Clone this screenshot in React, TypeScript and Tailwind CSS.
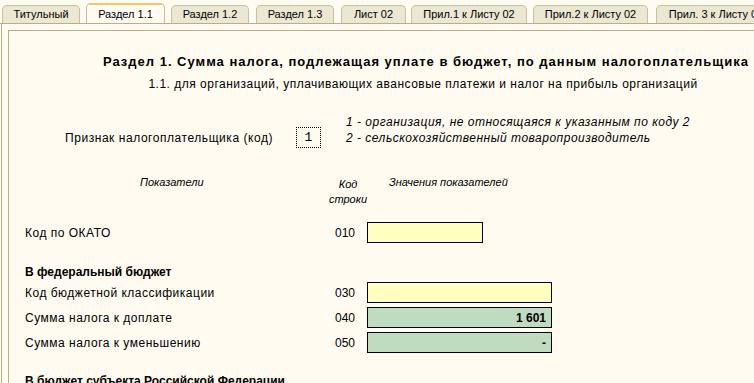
import React from "react";

const FONT = { fontFamily: '"Liberation Sans", Arial, sans-serif' };

const tabs = [
  { label: "Титульный", cls: "ml-[2px] w-[78px]" },
  { label: "Раздел 1.1", cls: "ml-[6px] w-[79px]", active: true },
  { label: "Раздел 1.2", cls: "ml-[6px] w-[78px]" },
  { label: "Раздел 1.3", cls: "ml-[7px] w-[78px]" },
  { label: "Лист 02", cls: "ml-[7px] w-[65px]" },
  { label: "Прил.1 к Листу 02", cls: "ml-[5px] w-[116px]" },
  { label: "Прил.2 к Листу 02", cls: "ml-[6px] w-[115px]" },
  { label: "Прил. 3 к Листу 02", cls: "ml-[8px] w-[120px]" },
];

function Tab({ label, cls, active }: { label: string; cls: string; active?: boolean }) {
  if (active) {
    return (
      <div
        className={`${cls} relative -mb-px flex h-[21px] shrink-0 items-center justify-center rounded-t-[5px] border border-b-0 border-[#c6bd9c] bg-[#fffbf0] text-[11px] text-black`}
      >
        <div className="absolute inset-x-[2px] -top-px h-[2px] rounded-t-[4px] bg-[#f4c46a]" />
        {label}
      </div>
    );
  }
  return (
    <div
      className={`${cls} flex h-[18px] shrink-0 items-center justify-center whitespace-nowrap rounded-t-[5px] border border-b-0 border-[#c9c09f] bg-[#ece7d2] text-[11px] text-black`}
    >
      {label}
    </div>
  );
}

function Row({ label, code, box }: { label: string; code: string; box: React.ReactNode }) {
  return (
    <div className="flex h-[21px] items-center">
      <div className="w-[310px] text-[12px] leading-[16px] tracking-[0.5px]">{label}</div>
      <div className="w-[32px] text-[12px] leading-[16px]">{code}</div>
      {box}
    </div>
  );
}

function Field({ tone, width, value }: { tone: "yellow" | "green"; width: string; value?: string }) {
  return (
    <div
      className={`${width} flex h-[21px] items-center justify-end border border-black pr-[5px] text-[12px] font-bold ${
        tone === "yellow" ? "bg-[#ffffc0]" : "bg-[#c0dcc0]"
      }`}
    >
      {value}
    </div>
  );
}

export default function App() {
  return (
    <div className="h-[383px] w-[754px] overflow-hidden bg-[#fffbf0] text-black" style={FONT}>
      <div className="flex h-[24px] items-end overflow-hidden border-b border-[#b8ae88]">
        {tabs.map((t) => (
          <Tab key={t.label} {...t} />
        ))}
      </div>

      <div className="ml-[1px] h-[359px] border-l border-[#b8ae88] pl-[6px] pt-[6px]">
        <div className="h-full overflow-hidden border-l border-t border-[#b8ae88]">
          <div className="mt-[23px] w-[834px] whitespace-nowrap text-center text-[13px] font-bold leading-[16px] tracking-[1px]">
            Раздел 1. Сумма налога, подлежащая уплате в бюджет, по данным налогоплательщика
          </div>
          <div className="mt-[6px] w-[828px] whitespace-nowrap text-center text-[12px] leading-[16px] tracking-[0.5px]">
            1.1. для организаций, уплачивающих авансовые платежи и налог на прибыль организаций
          </div>

          <div className="mt-[22px] flex h-[36px] items-start">
            <div className="ml-[56px] mt-[16px] w-[231px] whitespace-nowrap text-[12px] leading-[16px] tracking-[0.55px]">
              Признак налогоплательщика (код)
            </div>
            <div
              className="mt-[13px] flex h-[21px] w-[25px] items-center justify-center border border-dotted border-black text-[13px]"
              style={{ fontFamily: '"Liberation Mono", "Courier New", monospace' }}
            >
              1
            </div>
            <div className="ml-[25px] whitespace-nowrap text-[12px] italic leading-[16px] tracking-[0.5px]">
              <div>1 - организация, не относящаяся к указанным по коду 2</div>
              <div>2 - сельскохозяйственный товаропроизводитель</div>
            </div>
          </div>

          <div className="mt-[24px] flex h-[34px] items-start text-[11px] italic">
            <div className="ml-[131px] w-[185px] leading-[16px]">Показатели</div>
            <div className="mt-[3px] w-[46px] text-center leading-[15px]">
              <div>Код</div>
              <div>строки</div>
            </div>
            <div className="ml-[18px] leading-[16px]">Значения показателей</div>
          </div>

          <div className="mt-[14px] pl-[16px]">
            <Row label="Код по ОКАТО" code="010" box={<Field tone="yellow" width="w-[116px]" />} />
          </div>

          <div className="mt-[21px] pl-[16px] text-[12px] font-bold leading-[16px]">В федеральный бюджет</div>

          <div className="mt-[2px] flex flex-col gap-[4px] pl-[16px]">
            <Row label="Код бюджетной классификации" code="030" box={<Field tone="yellow" width="w-[185px]" />} />
            <Row label="Сумма налога к доплате" code="040" box={<Field tone="green" width="w-[185px]" value="1 601" />} />
            <Row label="Сумма налога к уменьшению" code="050" box={<Field tone="green" width="w-[185px]" value="-" />} />
          </div>

          <div className="mt-[20px] whitespace-nowrap pl-[16px] text-[12px] font-bold leading-[16px]">
            В бюджет субъекта Российской Федерации
          </div>
        </div>
      </div>
    </div>
  );
}
